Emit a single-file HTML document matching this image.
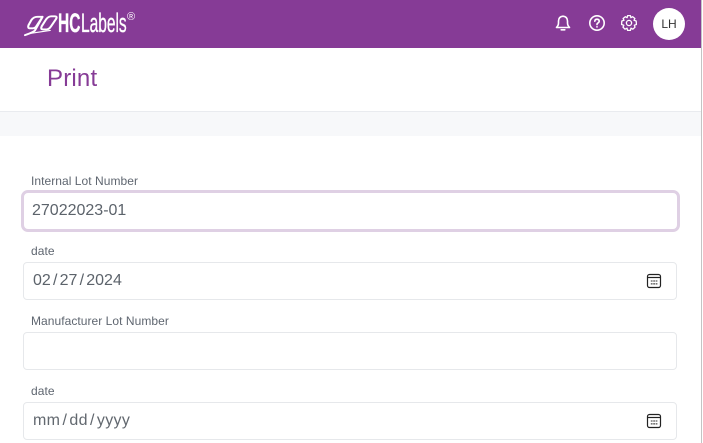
<!DOCTYPE html>
<html><head><meta charset="utf-8"><style>
*{box-sizing:border-box}
html,body{margin:0;padding:0;width:703px;height:443px;overflow:hidden;background:#fff;font-family:"Liberation Sans",sans-serif}
.abs{position:absolute}
.lbl{position:absolute;left:31px;font-size:12px;line-height:14px;color:#5f6670;letter-spacing:.05px}
.inp{position:absolute;left:23px;width:654px;height:38px;border:1px solid #e6e8eb;border-radius:4px;background:#fff}
.val{position:absolute;left:33px;font-size:16px;line-height:20px;color:#5c636b;white-space:nowrap}
.val i{font-style:normal;padding:0 2.2px}
</style></head><body>
<div class="abs" style="left:0;top:0;width:701px;height:48px;background:#863b96"></div>
<div class="abs" style="left:701px;top:0;width:1px;height:443px;background:#c4c4c4"></div>
<svg class="abs" style="left:0;top:0" width="60" height="40" viewBox="0 0 60 40" fill="none" stroke="#fff" stroke-width="1.800" stroke-linejoin="round" stroke-linecap="round"><g transform="translate(25 0) scale(1.170 1.050) translate(-24.500 -1)"><path d="M39.500 17H35Q32 17 30 20L27.500 25Q26.500 28 29 28H31Q33 28 34.200 26L39.500 17L33 30Q32 31.500 24.500 34.500"/><path d="M50 16.500H47Q44.500 16.500 42.500 19.500L38.800 26Q37.500 29 40 29H43Q45 29 46.800 26L50.800 19.500Q52.500 16.500 50 16.500Z"/><path d="M28 33L46 30" stroke-width="1.100"/></g></svg>
<div class="abs" style="left:58px;top:10px;font-size:26.500px;line-height:26px;color:#fff;transform:scaleX(.585);transform-origin:0 0;white-space:nowrap;-webkit-text-stroke:.35px #fff"><b>HC</b><span style="margin-left:1px">Labels</span></div>
<div class="abs" style="left:127px;top:11px;font-size:11px;line-height:12px;color:#fff">®</div>
<svg class="abs" style="left:554px;top:14px" width="18" height="18" viewBox="0 0 18 18" fill="none" stroke="#fff" stroke-width="1.600" stroke-linejoin="round"><path d="M2.500 13.500Q4.500 11.500 4.500 9V7Q4.800 2.500 9 2.200Q13.200 2.500 13.500 7V9Q13.500 11.500 15.500 13.500Z"/><path d="M7.200 15.800H10.800" stroke-linecap="round"/></svg>
<svg class="abs" style="left:588px;top:14px" width="18" height="18" viewBox="0 0 18 18" fill="none" stroke="#fff" stroke-width="1.600"><circle cx="9" cy="9" r="7.200"/><path d="M6.800 7.200Q7 5.200 9.100 5.200Q11.200 5.400 11.200 7.100Q11.200 8.200 10 8.900Q9 9.500 9 10.600" stroke-linecap="round"/><circle cx="9" cy="12.900" r=".9" fill="#fff" stroke="none"/></svg>
<svg class="abs" style="left:620px;top:14px" width="18" height="18" viewBox="0 0 18 18" fill="none" stroke="#fff" stroke-width="1.300" stroke-linejoin="round"><circle cx="9" cy="9" r="2.600"/><path d="M7.600 1.600H10.400L10.900 3.700L12.700 2.700L14.900 4.500L14 6.300L16.200 7L16.400 10.500L14.300 11.200L15 13.200L12.900 15.200L11 14.200L10.400 16.400H7.600L7 14.200L5 15.200L3 13.200L3.800 11.200L1.600 10.500L1.800 7L4 6.300L3.100 4.500L5.300 2.700L7.100 3.700Z"/></svg>
<div class="abs" style="left:653px;top:8px;width:32px;height:32px;border-radius:50%;background:#fff;color:#333;font-size:12px;line-height:32px;text-align:center">LH</div>
<div class="abs" style="left:47px;top:65px;font-size:24px;line-height:28px;color:#863b96;letter-spacing:.2px">Print</div>
<div class="abs" style="left:0;top:111px;width:701px;height:25px;background:#f7f8fa;border-top:1px solid #e9ebef"></div>
<div class="lbl" style="top:174px">Internal Lot Number</div>
<div class="inp" style="left:21px;top:190px;width:659px;height:42px;border:3px solid #dfd0e4;border-radius:7px"></div>
<div class="val" style="left:32px;top:201px">27022023-01</div>
<div class="lbl" style="top:244px">date</div>
<div class="inp" style="top:262px"></div>
<div class="val" style="top:271px">02<i>/</i>27<i>/</i>2024</div>
<svg class="abs" style="left:646px;top:273px" width="16" height="16" viewBox="0 0 16 16" fill="none"><rect x="1.500" y="1.500" width="13" height="13" rx="2" stroke="#222" stroke-width="1.200"/><path d="M1.500 4.500H14.500" stroke="#222" stroke-width="1.200"/><path d="M4.800 7.200h1.800v1.600H4.800zM7.200 7.200h1.800v1.600H7.200zM9.600 7.200h1.800v1.600H9.600zM4.800 10h1.800v1.600H4.800zM7.200 10h1.800v1.600H7.200zM9.600 10h1.800v1.600H9.600z" fill="#777"/></svg>
<div class="lbl" style="top:314px">Manufacturer Lot Number</div>
<div class="inp" style="top:332px"></div>
<div class="lbl" style="top:384px">date</div>
<div class="inp" style="top:402px"></div>
<div class="val" style="top:411px;color:#62686f;letter-spacing:.3px">mm<i>/</i>dd<i>/</i>yyyy</div>
<svg class="abs" style="left:646px;top:413px" width="16" height="16" viewBox="0 0 16 16" fill="none"><rect x="1.500" y="1.500" width="13" height="13" rx="2" stroke="#222" stroke-width="1.200"/><path d="M1.500 4.500H14.500" stroke="#222" stroke-width="1.200"/><path d="M4.800 7.200h1.800v1.600H4.800zM7.200 7.200h1.800v1.600H7.200zM9.600 7.200h1.800v1.600H9.600zM4.800 10h1.800v1.600H4.800zM7.200 10h1.800v1.600H7.200zM9.600 10h1.800v1.600H9.600z" fill="#777"/></svg>
</body></html>
